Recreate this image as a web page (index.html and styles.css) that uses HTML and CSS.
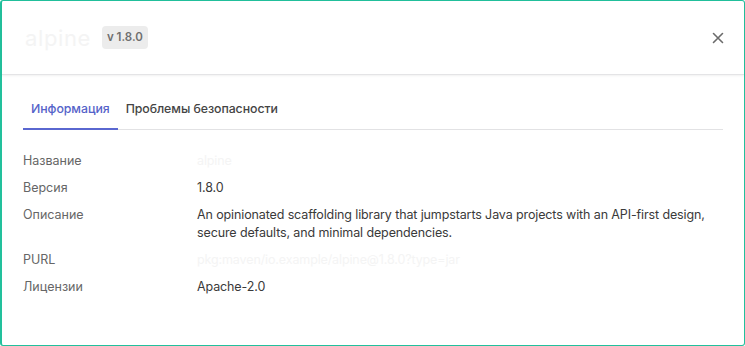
FILE: index.html
```html
<!DOCTYPE html>
<html lang="ru">
<head>
<meta charset="utf-8">
<link rel="stylesheet" href="styles.css">
</head>
<body>
<div class="frame">
  <header class="head">
    <div class="title">
      <span class="name">alpine</span>
      <span class="badge">v 1.8.0</span>
    </div>
    <button class="close" aria-label="Закрыть">
      <svg width="12" height="12" viewBox="0 0 12 12"><path d="M1.5 1.5 L10.5 10.5 M10.5 1.5 L1.5 10.5" stroke="#6b6b6b" stroke-width="1.6" stroke-linecap="round"/></svg>
    </button>
  </header>
  <main class="body">
    <nav class="tabs">
      <span class="tab active">Информация</span>
      <span class="tab">Проблемы безопасности</span>
    </nav>
    <dl class="info">
      <dt>Название</dt><dd class="faint">alpine</dd>
      <dt>Версия</dt><dd>1.8.0</dd>
      <dt>Описание</dt><dd>An opinionated scaffolding library that jumpstarts Java projects with an API-first design, secure defaults, and minimal dependencies.</dd>
      <dt>PURL</dt><dd class="faint">pkg:maven/io.example/alpine@1.8.0?type=jar</dd>
      <dt>Лицензии</dt><dd>Apache-2.0</dd>
    </dl>
  </main>
</div>
</body>
</html>
```
FILE: styles.css
```css
* { box-sizing: border-box; }
html, body { margin: 0; height: 100%; }
body { font-family: Inter, "Noto Sans", sans-serif; background: #fff; color: #333; }
.frame {
  height: 346px;
  border-style: solid;
  border-color: #22c09c;
  border-width: 1px 1px 1px 2px;
  border-radius: 3px;
  display: flex;
  flex-direction: column;
}
.head {
  height: 74px;
  display: flex;
  align-items: center;
  justify-content: space-between;
  padding: 0 20px 0 23px;
  border-bottom: 1px solid #e4e4e6;
  box-shadow: 0 1px 2px rgba(0,0,0,0.06);
}
.title { display: flex; align-items: center; gap: 11px; }
.name { font-size: 22px; font-weight: 400; color: #f4f4f4; letter-spacing: 0.6px; }
.badge {
  background: #ececec;
  color: #6f6f6f;
  font-size: 11.5px;
  font-weight: 600;
  padding: 5px 5px;
  border-radius: 4px;
  line-height: 13px;
}
.close { border: 0; background: none; padding: 0; width: 12px; height: 12px; display: flex; }
.body { padding: 16px 21px 0 21px; }
.tabs { display: flex; border-bottom: 1px solid #e2e2e4; }
.tab { font-size: 12.3px; font-weight: 500; color: #444; padding: 10px 8px 12px 8px; margin-bottom: -1px; border-bottom: 2px solid transparent; line-height: 15px; letter-spacing: -0.05px; }
.tab.active { color: #5563c9; border-bottom-color: #5a67d0; }
.info {
  margin: 22px 0 0 0;
  display: grid;
  grid-template-columns: 174px 1fr;
  row-gap: 9px;
  font-size: 12.5px;
  line-height: 18px;
}
.info dt { color: #666; }
.info dd { margin: 0; color: #3a3a3a; letter-spacing: -0.12px; }
.info dd.faint { color: #f4f4f4; }
```
